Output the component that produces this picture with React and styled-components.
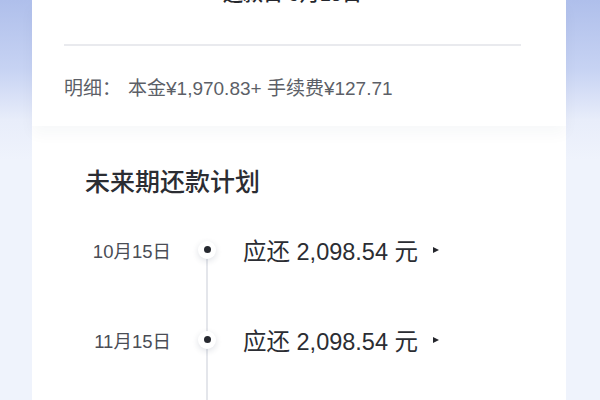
import React from 'react';
import styled, { createGlobalStyle } from 'styled-components';

const GlobalStyle = createGlobalStyle`
  html, body {
    margin: 0;
    padding: 0;
  }
  body {
    font-family: "Liberation Sans", "Noto Sans CJK SC", sans-serif;
  }
`;

const Page = styled.div`
  width: 600px;
  height: 400px;
  overflow: hidden;
  background: linear-gradient(
    180deg,
    #afbfeb 0px,
    #c7d3f3 70px,
    #e8edfa 120px,
    #eff3fc 160px,
    #eff3fc 100%
  );
`;

const Panel = styled.div`
  margin: 0 34px 0 32px;
  height: 100%;
  background: #ffffff;
  display: flex;
  flex-direction: column;
`;

const SummaryCard = styled.section`
  padding: 0 45px 25px 32px;
  background: #ffffff;
  box-shadow: 0 8px 14px rgba(40, 50, 90, 0.035);
  position: relative;
  z-index: 1;
`;

const DueTitle = styled.div`
  margin-top: -18px;
  height: 24px;
  line-height: 24px;
  text-align: center;
  font-size: 20px;
  font-weight: 500;
  color: #25272d;
`;

const Divider = styled.div`
  margin-top: 38px;
  height: 1.5px;
  background: #e9eaee;
`;

const Detail = styled.div`
  margin-top: 31px;
  line-height: 24px;
  font-size: 19px;
  color: #5c5f67;
  display: flex;
`;

const DetailLabel = styled.span`
  width: 64px;
`;

const PlanCard = styled.section`
  flex: 1;
  padding: 41px 0 0 53px;
  display: flex;
  flex-direction: column;
`;

const Heading = styled.h2`
  margin: 0;
  font-size: 25px;
  line-height: 30px;
  font-weight: 500;
  color: #2b2d33;
`;

const Timeline = styled.div`
  flex: 1;
  margin-top: 8px;
  display: flex;
  flex-direction: column;
`;

const Row = styled.div`
  display: grid;
  grid-template-columns: 86px 72px auto;
  align-items: center;
  height: 90px;
`;

const DateText = styled.span`
  text-align: right;
  font-size: 18.5px;
  color: #4a4d55;
`;

const Track = styled.div`
  position: relative;
  height: 100%;
  display: flex;
  align-items: center;
  justify-content: center;

  &::before {
    content: '';
    position: absolute;
    left: 50%;
    margin-left: -0.75px;
    width: 1.5px;
    top: ${(p) => (p.$first ? '50%' : '0')};
    bottom: 0;
    background: #e4e6eb;
  }
`;

const TailLine = styled.div`
  flex: 1;
  width: 1.5px;
  margin-left: 121.25px;
  background: #e4e6eb;
`;

const Dot = styled.span`
  position: relative;
  width: 18px;
  height: 18px;
  border-radius: 50%;
  background: #ffffff;
  box-shadow: 0 2px 6px rgba(30, 40, 80, 0.14);
  display: flex;
  align-items: center;
  justify-content: center;

  &::after {
    content: '';
    width: 7px;
    height: 7px;
    border-radius: 50%;
    background: #262930;
  }
`;

const Amount = styled.div`
  display: flex;
  align-items: center;
  font-size: 23.5px;
  color: #2b2d33;
`;

const Arrow = styled.span`
  margin-left: 15px;
  width: 0;
  height: 0;
  border-left: 6px solid #25272d;
  border-top: 3.5px solid transparent;
  border-bottom: 3.5px solid transparent;
`;

const plan = [
  { date: '10月15日', amount: '2,098.54' },
  { date: '11月15日', amount: '2,098.54' },
];

function App() {
  return (
    <Page>
      <GlobalStyle />
      <Panel>
        <SummaryCard>
          <DueTitle>还款日 9月15日</DueTitle>
          <Divider />
          <Detail>
            <DetailLabel>明细：</DetailLabel>
            <span>本金¥1,970.83+ 手续费¥127.71</span>
          </Detail>
        </SummaryCard>
        <PlanCard>
          <Heading>未来期还款计划</Heading>
          <Timeline>
            {plan.map((item, i) => (
              <Row key={item.date}>
                <DateText>{item.date}</DateText>
                <Track $first={i === 0}>
                  <Dot />
                </Track>
                <Amount>
                  应还 {item.amount} 元
                  <Arrow />
                </Amount>
              </Row>
            ))}
            <TailLine />
          </Timeline>
        </PlanCard>
      </Panel>
    </Page>
  );
}

export default App;
